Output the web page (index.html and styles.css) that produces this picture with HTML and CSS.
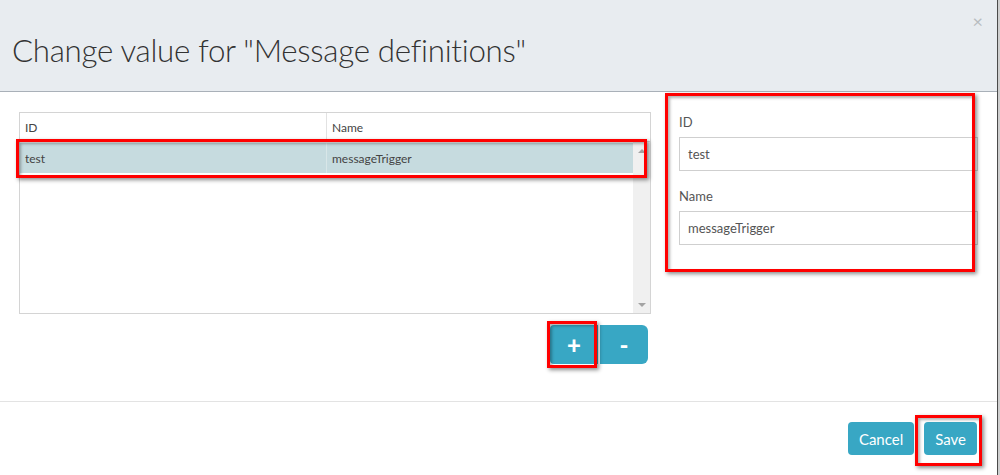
FILE: index.html
```html
<!DOCTYPE html>
<html>
<head>
<meta charset="utf-8">
<link rel="stylesheet" href="styles.css">
</head>
<body>
<div class="dialog">
  <div class="header">
    <h1 class="title">Change value for "Message definitions"</h1>
    <span class="close">×</span>
  </div>
  <div class="body">
    <div class="left">
      <div class="grid">
        <div class="grid-head">
          <div class="cell c1">ID</div>
          <div class="cell c2">Name</div>
        </div>
        <div class="grid-main">
          <div class="rows">
            <div class="row selected">
              <div class="cell c1">test</div>
              <div class="cell c2">messageTrigger</div>
            </div>
          </div>
          <div class="scrollbar">
            <span class="arrow up"></span>
            <span class="arrow down"></span>
          </div>
        </div>
      </div>
      <div class="btn-group">
        <button class="btn sq">+</button>
        <button class="btn sq">-</button>
      </div>
    </div>
    <div class="right">
      <label class="lbl">ID</label>
      <div class="input">test</div>
      <label class="lbl">Name</label>
      <div class="input">messageTrigger</div>
    </div>
  </div>
  <div class="footer">
    <button class="btn">Cancel</button>
    <button class="btn">Save</button>
  </div>
  <div class="mark m1"></div>
  <div class="mark m2"></div>
  <div class="mark m3"></div>
  <div class="mark m4"></div>
</div>
</body>
</html>
```
FILE: styles.css
```css
html, body {
  margin: 0;
  padding: 0;
  background: #cfcfcf;
}
body {
  font-family: Lato, "Open Sans", sans-serif;
  color: #333;
}
.dialog {
  position: relative;
  width: 997px;
  height: 475px;
  background: #fff;
  border-right: 1px solid #4a4a4a;
  display: flex;
  flex-direction: column;
}
.header {
  height: 91px;
  background: #e8ecf0;
  border-bottom: 1px solid #a9b0b8;
  position: relative;
  display: flex;
  align-items: center;
}
.title {
  margin: 0 0 0 12px;
  padding-top: 8px;
  font-weight: 300;
  font-size: 31.3px;
  color: #333;
  letter-spacing: -0.3px;
}
.close {
  position: absolute;
  right: 14px;
  top: 10px;
  font-size: 18px;
  color: #b8bcc0;
}
.body {
  flex: 1;
  display: flex;
  padding: 20px 19px 0 19px;
  gap: 28px;
}
.left {
  width: 632px;
  display: flex;
  flex-direction: column;
}
.grid {
  border: 1px solid #d4d4d4;
  height: 200px;
  display: flex;
  flex-direction: column;
  font-size: 12px;
  color: #444;
}
.grid-head {
  height: 28px;
  display: flex;
  border-bottom: 1px solid #d4d4d4;
}
.cell {
  display: flex;
  align-items: center;
  padding-left: 5px;
  box-sizing: border-box;
}
.c1 {
  width: 307px;
  border-right: 1px solid #e2e2e2;
}
.c2 {
  flex: 1;
}
.grid-main {
  flex: 1;
  display: flex;
}
.rows {
  flex: 1;
}
.row {
  display: flex;
  height: 30px;
  margin-top: 1px;
}
.row.selected {
  background: #c6dbdf;
}
.row .c1 {
  border-right: 1px solid #d8e6e8;
}
.scrollbar {
  width: 17px;
  background: #f0f0f0;
  display: flex;
  flex-direction: column;
  justify-content: space-between;
  align-items: center;
  padding: 7px 0 6px;
}
.arrow {
  width: 0;
  height: 0;
  border-left: 4px solid transparent;
  border-right: 4px solid transparent;
}
.arrow.up {
  border-bottom: 4px solid #a3a3a3;
}
.arrow.down {
  border-top: 4px solid #a3a3a3;
}
.btn-group {
  display: flex;
  justify-content: flex-end;
  gap: 2px;
  margin-top: 11px;
  padding-right: 3px;
}
.btn {
  background: #38a7c4;
  border: none;
  color: #fff;
  font-family: Lato, "Open Sans", sans-serif;
  font-size: 15px;
  border-radius: 4px;
  height: 33px;
  padding: 0 11px;
  cursor: pointer;
}
.sq {
  width: 48px;
  height: 39px;
  font-size: 24px;
  font-weight: 900;
  padding: 0;
  line-height: 1;
}
.btn-group .sq:first-child {
  border-radius: 4px 0 0 4px;
}
.btn-group .sq:last-child {
  border-radius: 0 6px 6px 0;
}
.right {
  width: 299px;
  display: flex;
  flex-direction: column;
  padding-top: 1px;
}
.lbl {
  font-size: 13px;
  color: #555;
  height: 24px;
  line-height: 18px;
}
.input {
  height: 32px;
  border: 1px solid #cfcfcf;
  font-size: 13px;
  color: #555;
  display: flex;
  align-items: center;
  padding-left: 8px;
  margin-bottom: 16px;
}
.footer {
  height: 74px;
  border-top: 1px solid #e3e3e3;
  display: flex;
  justify-content: flex-end;
  align-items: flex-start;
  gap: 10px;
  padding: 20px 20px 0 0;
  box-sizing: border-box;
}
.footer .btn {
  height: 33px;
}
.mark {
  position: absolute;
  border: 3px solid #f00;
  box-sizing: border-box;
  box-shadow: 2px 2px 4px rgba(0,0,0,0.45), inset 2px 2px 3px rgba(0,0,0,0.3);
}
.m1 { left: 16px; top: 139px; width: 631px; height: 39px; }
.m2 { left: 665px; top: 93px; width: 310px; height: 179px; }
.m3 { left: 547px; top: 321px; width: 50px; height: 47px; }
.m4 { left: 915px; top: 415px; width: 67px; height: 51px; }
```
